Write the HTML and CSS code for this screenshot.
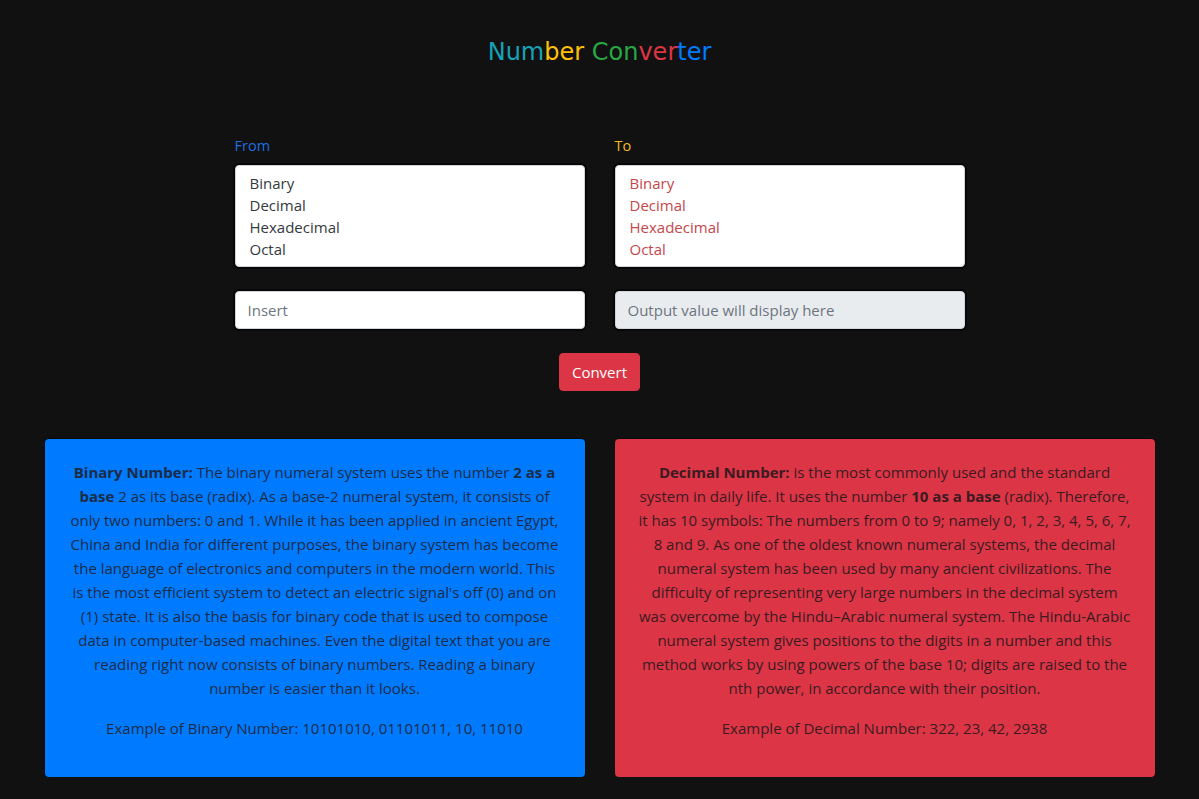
FILE: index.html
```html
<!DOCTYPE html>
<html lang="en">
<head>
<meta charset="utf-8">
<title>Number Converter</title>
<link rel="stylesheet" href="styles.css">
</head>
<body>
<div class="page">
  <h1 class="title"><span class="c-teal">Num</span><span class="c-yellow">ber</span> <span class="c-green">Con</span><span class="c-red">ver</span><span class="c-blue">ter</span></h1>

  <div class="converter">
    <div class="grid">
      <div class="field">
        <label class="lbl lbl-from">From</label>
        <div class="listbox">
          <div class="opt">Binary</div>
          <div class="opt">Decimal</div>
          <div class="opt">Hexadecimal</div>
          <div class="opt">Octal</div>
        </div>
      </div>
      <div class="field">
        <label class="lbl lbl-to">To</label>
        <div class="listbox listbox-to">
          <div class="opt">Binary</div>
          <div class="opt">Decimal</div>
          <div class="opt">Hexadecimal</div>
          <div class="opt">Octal</div>
        </div>
      </div>
      <input class="inp" type="text" placeholder="Insert">
      <input class="inp inp-out" type="text" placeholder="Output value will display here" readonly>
    </div>
    <div class="actions">
      <button class="btn" type="button">Convert</button>
    </div>
  </div>

  <div class="cards">
    <div class="card card-blue">
      <p><b>Binary Number:</b> The binary numeral system uses the number <b>2 as a base</b> 2 as its base (radix). As a base-2 numeral system, it consists of only two numbers: 0 and 1. While it has been applied in ancient Egypt, China and India for different purposes, the binary system has become the language of electronics and computers in the modern world. This is the most efficient system to detect an electric signal's off (0) and on (1) state. It is also the basis for binary code that is used to compose data in computer-based machines. Even the digital text that you are reading right now consists of binary numbers. Reading a binary number is easier than it looks.</p>
      <p>Example of Binary Number: 10101010, 01101011, 10, 11010</p>
    </div>
    <div class="card card-red">
      <p><b>Decimal Number:</b> is the most commonly used and the standard system in daily life. It uses the number <b>10 as a base</b> (radix). Therefore, it has 10 symbols: The numbers from 0 to 9; namely 0, 1, 2, 3, 4, 5, 6, 7, 8 and 9. As one of the oldest known numeral systems, the decimal numeral system has been used by many ancient civilizations. The difficulty of representing very large numbers in the decimal system was overcome by the Hindu–Arabic numeral system. The Hindu-Arabic numeral system gives positions to the digits in a number and this method works by using powers of the base 10; digits are raised to the nth power, in accordance with their position.</p>
      <p>Example of Decimal Number: 322, 23, 42, 2938</p>
    </div>
  </div>
</div>
</body>
</html>
```

FILE: styles.css
```css
* { box-sizing: border-box; }
html, body {
  margin: 0;
  padding: 0;
  background: #111111;
  font-family: "Open Sans", Lato, sans-serif;
  font-size: 15px;
  color: #212529;
}
.page {
  width: 1110px;
  margin: 0 auto;
  padding-top: 36px;
}
.title {
  margin: 0;
  text-align: center;
  font-family: "DejaVu Sans", Verdana, sans-serif;
  font-weight: normal;
  font-size: 24px;
  line-height: 32px;
}
.c-teal { color: #17a2b8; }
.c-yellow { color: #ffc107; }
.c-green { color: #28a745; }
.c-red { color: #dc3545; }
.c-blue { color: #007bff; }

.converter {
  width: 730px;
  margin: 67px auto 0;
}
.grid {
  display: grid;
  grid-template-columns: 350px 350px;
  column-gap: 30px;
  row-gap: 24px;
}
.field {
  display: flex;
  flex-direction: column;
}
.lbl {
  font-size: 14.5px;
  line-height: 22px;
  margin-bottom: 8px;
}
.lbl-from { color: #1a6fe0; }
.lbl-to { color: #f5b921; }
.listbox {
  height: 102px;
  background: #fff;
  border: 1px solid #ced4da;
  border-radius: 4px;
  padding: 6px 14px;
  box-shadow: 0 0 0 2px #070707;
  color: #343a40;
  font-size: 15px;
}
.listbox-to { color: #c3474b; }
.opt {
  line-height: 22px;
  height: 22px;
}
.inp {
  display: block;
  width: 100%;
  height: 38px;
  border: 1px solid #ced4da;
  border-radius: 4px;
  padding: 6px 12px;
  font-family: inherit;
  font-size: 15px;
  background: #fff;
  color: #495057;
  box-shadow: 0 0 0 2px #070707;
  outline: none;
}
.inp::placeholder { color: #6c757d; }
.inp-out { background: #e9ecef; }
.actions {
  display: flex;
  justify-content: center;
  margin-top: 24px;
}
.btn {
  background: #dc3545;
  color: #fff;
  border: 1px solid #dc3545;
  border-radius: 4px;
  font-family: inherit;
  font-size: 15px;
  line-height: 24px;
  padding: 6px 12px;
}
.cards {
  display: grid;
  grid-template-columns: 540px 540px;
  column-gap: 30px;
  margin-top: 48px;
}
.card {
  border-radius: 4px;
  padding: 21px 22.3px 21px;
  text-align: center;
  font-size: 15px;
  line-height: 24px;
  box-shadow: 0 0 0 1px rgba(0,0,0,0.4);
}
.card p { margin: 0 0 16px; }
.card-blue { background: #007bff; color: #1c2b45; }
.card-red { background: #dc3545; color: #3b1b22; }
```
